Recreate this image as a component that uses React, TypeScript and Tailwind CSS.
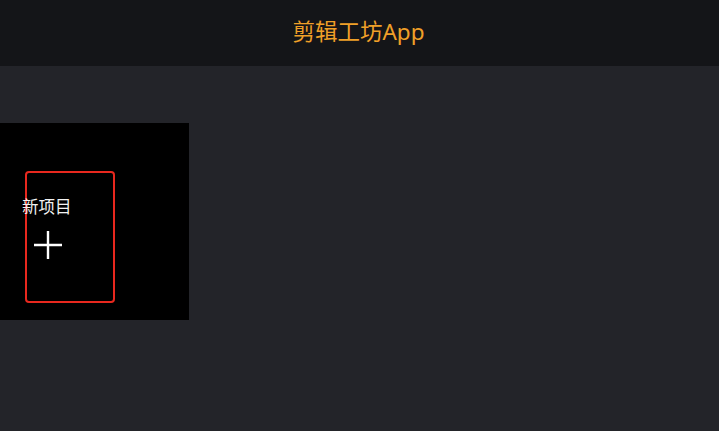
import React from "react";

export default function App() {
  return (
    <div
      className="w-[719px] h-[431px] bg-[#232429] flex flex-col overflow-hidden"
      style={{ fontFamily: '"Noto Sans", "Noto Sans CJK SC", sans-serif' }}
    >
      <header className="h-[66px] bg-[#141518] flex items-center justify-center shrink-0">
        <span className="text-[22.5px] leading-none text-[#f0a028] -ml-[2px] -mt-[1px]">剪辑工坊App</span>
      </header>
      <main className="pt-[57px]">
        <div className="w-[189px] h-[197px] bg-black pl-[25px] pt-[48px]">
          <div className="w-[90px] h-[132px] border-[2.5px] border-[#e8281e] rounded-[4px] pt-[22px]">
            <div className="-ml-[5px] text-[16.5px] leading-[24px] text-[#f2f2f2] whitespace-nowrap">
              新项目
            </div>
            <svg
              width="30"
              height="30"
              viewBox="0 0 30 30"
              className="ml-[6px] mt-[11px]"
            >
              <path d="M15 1V29M1 15H29" stroke="#ffffff" strokeWidth="2.4" />
            </svg>
          </div>
        </div>
      </main>
    </div>
  );
}
